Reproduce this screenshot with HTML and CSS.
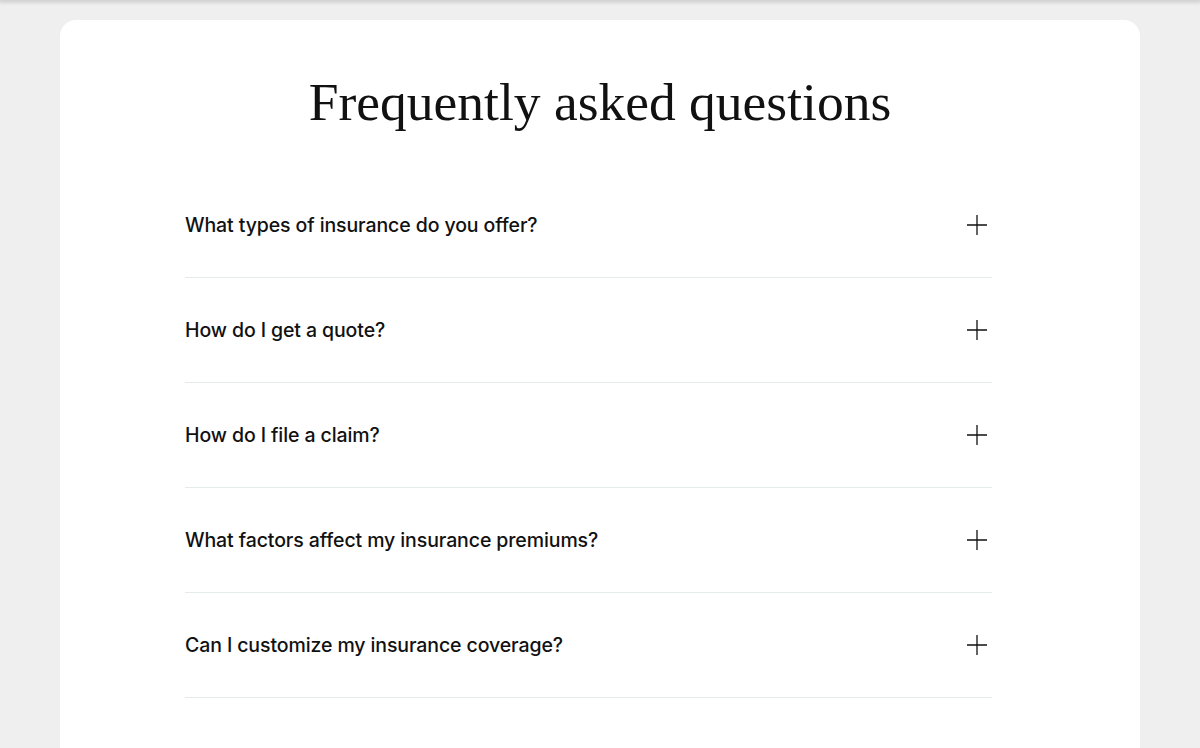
FILE: index.html
```html
<!DOCTYPE html>
<html lang="en">
<head>
<meta charset="utf-8">
<link rel="stylesheet" href="styles.css">
</head>
<body>
<div class="topbar"></div>
<main class="page">
  <section class="card">
    <h1 class="title">Frequently asked questions</h1>
    <ul class="faq">
      <li class="item"><span class="q">What types of insurance do you offer?</span><svg class="plus" viewBox="0 0 20 20" width="20" height="20"><path d="M10 0V20M0 10H20" stroke="#111" stroke-width="1.3" fill="none"/></svg></li>
      <li class="item"><span class="q">How do I get a quote?</span><svg class="plus" viewBox="0 0 20 20" width="20" height="20"><path d="M10 0V20M0 10H20" stroke="#111" stroke-width="1.3" fill="none"/></svg></li>
      <li class="item"><span class="q">How do I file a claim?</span><svg class="plus" viewBox="0 0 20 20" width="20" height="20"><path d="M10 0V20M0 10H20" stroke="#111" stroke-width="1.3" fill="none"/></svg></li>
      <li class="item"><span class="q">What factors affect my insurance premiums?</span><svg class="plus" viewBox="0 0 20 20" width="20" height="20"><path d="M10 0V20M0 10H20" stroke="#111" stroke-width="1.3" fill="none"/></svg></li>
      <li class="item"><span class="q">Can I customize my insurance coverage?</span><svg class="plus" viewBox="0 0 20 20" width="20" height="20"><path d="M10 0V20M0 10H20" stroke="#111" stroke-width="1.3" fill="none"/></svg></li>
    </ul>
  </section>
</main>
</body>
</html>
```
FILE: styles.css
```css
html, body { margin: 0; padding: 0; }
body {
  background: #efefef;
  height: 748px;
  overflow: hidden;
  font-family: "Inter", "Liberation Sans", sans-serif;
}
.topbar {
  height: 0;
  box-shadow: 0 0 4px 2px rgba(0,0,0,0.18);
  position: relative;
}
.page { padding: 20px 60px 0; }
.card {
  background: #fff;
  border-radius: 16px 16px 0 0;
  height: 728px;
  overflow: hidden;
  box-sizing: border-box;
  padding: 70px 0 0;
}
.title {
  margin: 0 0 59px;
  text-align: center;
  font-family: "Liberation Serif", "DejaVu Serif", serif;
  font-weight: 400;
  font-size: 53.5px;
  line-height: 24px;
  color: #111;
}
.faq { list-style: none; margin: 0 148px 0 125px; padding: 0; }
.item {
  display: flex;
  align-items: center;
  justify-content: space-between;
  height: 104px;
  border-bottom: 1px solid #e3eceb;
  padding: 0 5px 0 0;
}
.q {
  font-size: 19.5px;
  font-weight: 500;
  color: #111;
  letter-spacing: -0.1px;
}
.plus { display: block; }
```
